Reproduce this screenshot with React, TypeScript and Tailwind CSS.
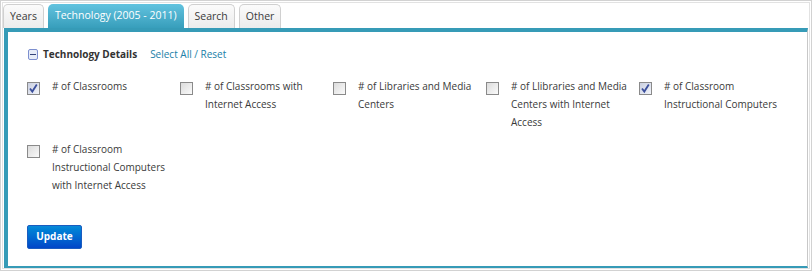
import React from "react";

const font = { fontFamily: '"Open Sans", "Noto Sans", sans-serif' };

function Box({ checked }: { checked: boolean }) {
  return (
    <span
      className={
        "mt-[5px] flex h-[13px] w-[13px] shrink-0 items-center justify-center border border-[#8a8a8a] bg-gradient-to-br " +
        (checked ? "from-[#c9cfe0] to-[#f2f4fa]" : "from-[#dcdcdc] to-[#fafafa]")
      }
    >
      {checked && (
        <svg width="11" height="11" viewBox="0 0 11 11">
          <path d="M2 5.5 L4.3 8.6 L8.8 1.6" fill="none" stroke="#3b4f9c" strokeWidth="1.8" />
        </svg>
      )}
    </span>
  );
}

const items: { label: string; checked: boolean }[] = [
  { label: "# of Classrooms", checked: true },
  { label: "# of Classrooms with Internet Access", checked: false },
  { label: "# of Libraries and Media Centers", checked: false },
  { label: "# of Llibraries and Media Centers with Internet Access", checked: false },
  { label: "# of Classroom Instructional Computers", checked: true },
  { label: "# of Classroom Instructional Computers with Internet Access", checked: false },
];

const tabs = ["Years", "Technology (2005 - 2011)", "Search", "Other"];

export default function App() {
  return (
    <div className="h-[271px] w-[812px] border border-[#d2d2d2] bg-white p-[1px]" style={font}>
      <div className="flex h-full flex-col border border-[#e2e2e2]">
        <div className="mt-[1px] flex h-[24px] items-end gap-[4px] pl-0">
          {tabs.map((t, i) =>
            i === 1 ? (
              <div
                key={t}
                className="flex h-[24px] items-center rounded-t-[5px] bg-gradient-to-b from-[#62c3df] to-[#379ebb] px-[7px] text-[10.5px] text-white"
              >
                {t}
              </div>
            ) : (
              <div
                key={t}
                className="flex h-[24px] items-center rounded-t-[5px] border border-b-0 border-[#d0d0d0] bg-gradient-to-b from-[#fbfbfb] to-[#ececec] px-[6px] text-[10.5px] text-[#3a3a3a]"
              >
                {t}
              </div>
            )
          )}
        </div>
        <div className="ml-[1px] mr-[1px] flex flex-1 flex-col border-b-2 border-l-4 border-t-4 border-r border-b-[#369bb7] border-l-[#369bb7] border-t-[#369bb7] border-r-[#c8c8c8] pl-[19px] pt-[15px]">
          <div className="flex items-center">
            <span className="ml-[1px] flex h-[11px] w-[10px] items-center justify-center rounded-[2px] border border-[#7d8fcf] bg-[#e6ecf8]">
              <span className="h-[1px] w-[6px] bg-[#34447a]" />
            </span>
            <span className="ml-[5px] text-[10px] font-bold text-[#333]">Technology Details</span>
            <span className="ml-[13px] text-[10px] text-[#2180a8]">Select All / Reset</span>
          </div>
          <div className="mt-[15px] grid grid-cols-[repeat(5,153px)] gap-y-[9px]">
            {items.map((it) => (
              <div key={it.label} className="flex">
                <Box checked={it.checked} />
                <span className="ml-[12px] w-[124px] text-[10px] leading-[18px] text-[#3a3a3a]">{it.label}</span>
              </div>
            ))}
          </div>
          <div className="mt-[28px]">
            <button className="h-[24px] w-[55px] rounded-[2px] border border-[#1a5cc0] bg-gradient-to-b from-[#0a8ad8] to-[#0045c8] text-[10px] font-bold text-white">
              Update
            </button>
          </div>
        </div>
      </div>
    </div>
  );
}
